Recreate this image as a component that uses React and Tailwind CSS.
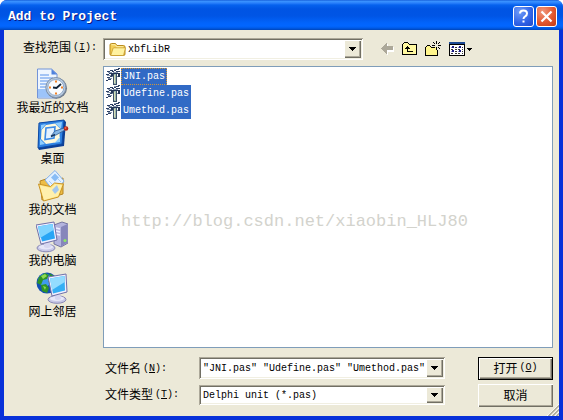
import React, { useState } from "react";

const latin = "font-['Liberation_Mono','Noto_Sans_CJK_SC',monospace] text-[10px]";
const cjk = "font-['Noto_Sans_CJK_SC',sans-serif] text-[12px]";
const sunken =
  "shadow-[inset_1px_1px_#aca899,inset_-1px_-1px_#ffffff,inset_2px_2px_#716f64,inset_-2px_-2px_#f1efe2]";
const raised =
  "shadow-[inset_1px_1px_#ffffff,inset_-1px_-1px_#716f64,inset_-2px_-2px_#aca899]";

function DropArrow() {
  return (
    <span
      className={`pointer-events-none absolute top-[2px] right-[2px] bottom-[2px] flex w-[17px] items-center justify-center bg-[#ece9d8] ${raised}`}
      aria-hidden="true"
    >
      <svg width="7" height="4" shapeRendering="crispEdges">
        <path d="M0 0h7v1H6v1H5v1H4v1H3V3H2V2H1V1H0z" fill="#000" />
      </svg>
    </span>
  );
}

function Combo({ children, className = "" }) {
  return (
    <div className={`relative flex items-center bg-white p-[2px] ${sunken} ${className}`}>
      {children}
      <DropArrow />
    </div>
  );
}

function FolderIcon() {
  return (
    <svg width="17" height="15" viewBox="0 0 17 15" className="shrink-0">
      <path d="M1 3Q1 1.500 2.500 1.500h4l1.500 2h6.500Q16 3.500 16 5v7q0 1.500-1.500 1.500h-12Q1 13.500 1 12z" fill="#f4cf58" stroke="#b98b1d" />
      <path d="M2 12.500 4 6.500q.2-.7 1-.7h11.500l-1.800 7q-.2.700-1 .700H2.500z" fill="#fff2a0" stroke="#c89b2b" strokeWidth=".8" />
      <path d="M2.500 2.700h3.700l1.500 2h6.500" fill="none" stroke="#fff5bd" strokeWidth=".8" />
    </svg>
  );
}

function BackIcon() {
  return (
    <svg width="14" height="12" shapeRendering="crispEdges">
      <path d="M1 6.500 7 1v3h6v5H7v3z" fill="#fff" />
      <path d="M0 5.500 6 0v3h6v4H6v4z" fill="#aca899" />
    </svg>
  );
}

function UpIcon() {
  return (
    <svg width="16" height="14" shapeRendering="crispEdges">
      <path d="M1 2h1V1h4v1h1v1h7v9H1z" fill="#fff8a0" />
      <path d="M2 0h4v1H2zM1 1h1v1H1zM6 1h1v1H6zM0 2h1v11H0zM7 2h8v1H7zM14 3h1v10h-1zM0 12h15v1H0z" fill="#000" />
      <path d="M5 4h1v1h1v1h1v1H6v2h5v1H5V7H3V6h1V5h1z" fill="#000" />
    </svg>
  );
}

function NewFolderIcon() {
  return (
    <svg width="17" height="16" shapeRendering="crispEdges">
      <path d="M1 6h1V5h3v1h7v8H1z" fill="#fff58c" />
      <path d="M2 4h3v1H2zM1 5h1v1H1zM5 5h1v1H5zM0 6h1v8H0zM6 6h3v1H6zM12 9h1v5h-1zM0 14h13v1H0z" fill="#000" />
      <path d="M11 0h1v3h-1zM11 6h1v3h-1zM7 4h3v1H7zM13 4h3v1h-3zM8 1h1v1H8zM9 2h1v1H9zM13 2h1v1h-1zM14 1h1v1h-1zM13 6h1v1h-1zM14 7h1v1h-1zM9 6h1v1H9z" fill="#000" />
    </svg>
  );
}

function ViewsIcon() {
  return (
    <svg width="24" height="14" shapeRendering="crispEdges">
      <path d="M0 0h16v14H0z" fill="#000" />
      <path d="M1 3h14v10H1z" fill="#fff" />
      <path d="M0 0h16v2H0z" fill="#1c4a94" />
      <path d="M3 4h2v2H3zM10 4h2v2h-2zM3 8h2v2H3zM10 8h2v2h-2z" fill="#1c1c84" />
      <path d="M2 5h1v1H2zM9 5h1v1H9zM2 9h1v1H2zM9 9h1v1H9z" fill="#8c8cd0" />
      <path d="M6 5h2v1H6zM13 5h1v1h-1zM6 9h2v1H6zM13 9h1v1h-1zM2 7h2v1H2zM6 7h2v1H6zM9 7h2v1H9zM13 7h1v1h-1zM2 11h2v1H2zM6 11h2v1H6zM9 11h2v1H9zM13 11h1v1h-1z" fill="#333" />
      <path d="M18 6h5v1h-1v1h-1v1h-1V8h-1V7h-1z" fill="#000" />
    </svg>
  );
}

function RecentIcon() {
  return (
    <svg width="32" height="32" viewBox="0 0 32 32">
      <path d="M1.500 1h14L21 6v24H1.500z" fill="#eef6ff" stroke="#7394d8" />
      <path d="M2 21h18v8.500H2z" fill="#9cc4fa" />
      <path d="M15.500 1v5.500H21z" fill="#4f82dc" />
      <path d="M4 7h9M4 10h13M4 13h9M4 16h7M4 19h6" stroke="#8bb4f2" strokeWidth="1.300" />
      <circle cx="20.500" cy="20.200" r="10.500" fill="#6d7888" />
      <circle cx="19.800" cy="19.500" r="10" fill="#b9cbe0" stroke="#7f93ab" />
      <circle cx="19.800" cy="19.500" r="8" fill="#f8fcff" stroke="#8fa9c8" />
      <path d="M20 12.500v2M20 24.500v2M13 19.500h2M25 19.500h2" stroke="#f08228" strokeWidth="2" />
      <path d="m17 19.500 3.500.500 4.500-4" fill="none" stroke="#102338" strokeWidth="1.800" />
    </svg>
  );
}

function DesktopIcon() {
  return (
    <svg width="32" height="32" viewBox="0 0 32 32">
      <path d="M2 4 27 1l2 2-2 24-25 4-1-2z" fill="#0d3f96" />
      <path d="M2 4 27 1l-2 24-24 4z" fill="#2f82e2" stroke="#0d4aa5" />
      <path d="m4 6 5-1-5 6zM18 4l7-1-1 7zM3 20l5 5-5 1zM23 17v6l-6 1z" fill="#8cccff" />
      <path d="M9 6 18 4.500l5 5-.5 9-4.500 5-9 1.500-5-5 .5-9z" fill="#fff9dc" />
      <path d="m9 9 9-1-1 11-9 1.500z" fill="#e3f1ff" stroke="#3e8ce6" strokeWidth="1.600" />
      <path d="m14 17 4-5 9-3 1 2-9 5z" fill="#86b7e6" stroke="#305a94" strokeWidth=".8" />
      <path d="m14 17.500 4-2" stroke="#18385f" strokeWidth="1.500" />
      <circle cx="29" cy="9.500" r="2.300" fill="#b82416" />
      <circle cx="28.500" cy="9" r="1" fill="#f06a50" />
    </svg>
  );
}

function DocumentsIcon() {
  return (
    <svg width="32" height="32" viewBox="0 0 32 32">
      <path d="M4 11 10 9l2 3 15-4v16L6 30z" fill="#edbd45" stroke="#b68420" />
      <path d="m9 10 10-9.500L28 11l-9 12z" fill="#e3f1ff" stroke="#83afe8" />
      <path d="m15 7.500 4-4 4 4-4 4z" fill="#88bcf5" />
      <path d="m13 11 3 3M22 9l3 3" stroke="#a6ccf8" />
      <path d="m2.500 14 12 2.500 4-3.500 9 1-5 13-15 4z" fill="#ffe27a" stroke="#c99428" />
      <path d="m4 15.500 11 2.500 4-4 7 1-4 11-14 4z" fill="#fff0ac" />
      <path d="m16 20 5-5 2 5-4 4z" fill="#a4c8ee" />
    </svg>
  );
}

function ComputerIcon() {
  return (
    <svg width="32" height="32" viewBox="0 0 32 32">
      <path d="m18 4 8-3 6 2v19l-7 4-7-3z" fill="#b4b4de" stroke="#76769f" />
      <path d="m25 6 6.500-3v18.500L25 25.500z" fill="#8686bb" />
      <path d="m20 7 4 1M20 10l4 1M20 13l4 1" stroke="#eeeeff" strokeWidth="1.300" />
      <circle cx="29" cy="19.500" r="1.500" fill="#8dea62" />
      <ellipse cx="10" cy="27" rx="9" ry="3.800" fill="#c8c8e8" stroke="#8989b5" />
      <ellipse cx="10" cy="26" rx="7" ry="2.500" fill="#e6e6f8" />
      <path d="M8 20h6l1 6q-4 2-7 0z" fill="#d6d6f0" />
      <path d="m0 4 18-3 3 18-16 4z" fill="#f0f0ff" stroke="#7070a8" />
      <path d="m2 5.500 14.500-2.500L19 17.500 6 20.500z" fill="#28a5f5" />
      <path d="m2 5.500 14.500-2.500 1 6L4 17z" fill="#7fd4ff" />
    </svg>
  );
}

function NetworkIcon() {
  return (
    <svg width="32" height="32" viewBox="0 0 32 32">
      <circle cx="11" cy="11" r="10.500" fill="#124fb4" />
      <circle cx="9" cy="8" r="6.500" fill="#3f9af0" />
      <path d="m3 5 6-4 4 2-2 4-4 1-2 5-4-2zM13 1l5 3 3 5-6 4-3-4 3-3zM5 13l5-1 3 4-2 5-5-2z" fill="#2f9428" />
      <path d="m5 4 4-2 2 2-4 3zM14 6l3 1-2 4zM7 14l3 1-1 3z" fill="#8fdc52" />
      <ellipse cx="21" cy="27.500" rx="9" ry="3.800" fill="#c8c8e8" stroke="#8989b5" />
      <ellipse cx="21" cy="26.500" rx="7" ry="2.500" fill="#e8e8f8" />
      <path d="M19 22h5l1 5q-4 2-6 0z" fill="#d6d6f0" />
      <path d="m12 5 18-3 1 18-15 4z" fill="#f0f0ff" stroke="#7070a8" />
      <path d="M14 6.500 28.500 4l.5 14.500L17 21.500z" fill="#35aff4" />
      <path d="M14 6.500 28.500 4l.3 6L16 18z" fill="#93dcff" />
    </svg>
  );
}

function UnitIcon() {
  return (
    <svg width="15" height="17" viewBox="0 0 15 17" className="shrink-0" shapeRendering="crispEdges">
      <path d="M1 3h3v1H1zM4 2h3v1H4zM0 6h3v1H0zM3 5h3v1H3zM6 3h2v1H6zM8 2h2v1H8zM10 1h3v1h-3zM12 0h2v1h-2zM1 9h3v1H1zM4 8h2v1H4zM0 12h2v1H0zM2 11h3v1H2zM10 3h4v1h-4z" fill="#2c3f63" />
      <path d="M2 4h4v1H2zM7 4h5v1H7zM1 7h4v1H1zM8 1h2v1H8zM2 10h3v1H2zM5 10h1v1H5z" fill="#8294ad" />
      <path d="M5 5h9v1H5zM5 6h2v2H5zM12 6h2v3h-2z" fill="#233656" />
      <path d="M7 6h4v11H7z" fill="#3c5068" />
      <path d="M8 6h2v10H8z" fill="#9db8ae" />
      <path d="M8 7h1v8H8z" fill="#d8dfb8" />
      <path d="M11 8h1v1h-1zM6 8h1v1H6z" fill="#74879b" />
    </svg>
  );
}

const places = [
  ["我最近的文档", RecentIcon],
  ["桌面", DesktopIcon],
  ["我的文档", DocumentsIcon],
  ["我的电脑", ComputerIcon],
  ["网上邻居", NetworkIcon],
];

const files = ["JNI.pas", "Udefine.pas", "Umethod.pas"];

function FieldLabel({ htmlFor, text, hotkey, className = "" }) {
  return (
    <label htmlFor={htmlFor} className={`flex items-center whitespace-nowrap ${cjk} ${className}`}>
      {text}
      <span className={`pl-[2px] ${latin}`}>
        (<u>{hotkey}</u>):
      </span>
    </label>
  );
}

export default function App() {
  const [name, setName] = useState('"JNI.pas" "Udefine.pas" "Umethod.pas"');

  return (
    <div className="bg-white">
      <main className="flex min-h-screen flex-col overflow-hidden rounded-t-[7px] bg-[#0831d9] text-black">
        <header className="flex h-[30px] shrink-0 items-center bg-[linear-gradient(to_bottom,#0a4fd0_0px,#3d95ff_1px,#2a80fb_3px,#0662ee_5px,#0054e3_9px,#0055e5_16px,#0264fb_23px,#0266ff_26px,#005be8_28px,#0045b8_30px)] pt-[3px] pr-[6px] pl-2">
          <h1 className="flex-1 font-['Liberation_Mono',monospace] text-[13px] font-bold text-white [text-shadow:1px_1px_#0a1883]">
            Add to Project
          </h1>
          <div className="flex gap-[2px]">
            <button
              aria-label="Help"
              className="flex size-[21px] items-center justify-center rounded-[3px] border border-white bg-[radial-gradient(circle_at_30%_25%,#6f9cf8,#2f62e6_60%,#1f49c8)]"
            >
              <svg width="13" height="15" viewBox="0 0 13 15">
                <path d="M3 4.500Q3 1.500 6.500 1.500T10 4.500Q10 6.300 8.200 7.300 6.500 8.200 6.500 10" fill="none" stroke="#fff" strokeWidth="2" />
                <path d="M5.500 11.500h2v2h-2z" fill="#fff" />
              </svg>
            </button>
            <button
              aria-label="Close"
              className="flex size-[21px] items-center justify-center rounded-[3px] border border-white bg-[radial-gradient(circle_at_30%_25%,#f0987c,#e2572f_55%,#c33a12)]"
            >
              <svg width="13" height="13" viewBox="0 0 13 13">
                <path d="m1.500 1.500 10 10M11.500 1.500l-10 10" stroke="#fff" strokeWidth="2.200" />
              </svg>
            </button>
          </div>
        </header>

        <div className="mx-1 mb-1 flex flex-1 flex-col">
          <div className="relative flex flex-1 flex-col bg-[#ece9d8] pt-2 pr-[6px] pb-[9px]">
            <div className="flex h-[22px]">
              <FieldLabel htmlFor="look-in" text="查找范围" hotkey="I" className="w-[99px] shrink-0 pb-1 pl-[19px]" />
              <Combo className="min-w-0 flex-1 pl-[6px]">
                <FolderIcon />
                <select id="look-in" className={`h-full min-w-0 flex-1 appearance-none bg-transparent pl-[2px] outline-none ${latin}`}>
                  <option>xbfLibR</option>
                </select>
              </Combo>
              <div className="ml-[18px] flex w-[172px] shrink-0 items-center gap-[7px]">
                <button aria-label="Back"><BackIcon /></button>
                <button aria-label="Up one level"><UpIcon /></button>
                <button aria-label="New folder"><NewFolderIcon /></button>
                <button aria-label="Views"><ViewsIcon /></button>
              </div>
            </div>

            <div className="mt-[6px] flex flex-1">
              <nav className="flex w-[99px] shrink-0 flex-col items-center gap-[5px] pt-[2px] pr-[2px]">
                {places.map(([label, Icon]) => (
                  <button key={label} className={`flex flex-col items-center whitespace-nowrap ${cjk}`}>
                    <Icon />
                    <span className="leading-[14px]">{label}</span>
                  </button>
                ))}
              </nav>

              <div className="flex min-w-0 flex-1 flex-col">
                <div className="relative flex-1 border border-[#7f9db9] bg-white p-[1px]">
                  <ul role="listbox" aria-label="Files" aria-multiselectable="true">
                    {files.map((file, i) => (
                      <li key={file} role="option" aria-selected="true" className="flex h-[17px] items-center pl-px">
                        <UnitIcon />
                        <span
                          className={`h-[17px] border bg-[#316ac5] px-px leading-[16px] text-white ${latin} ${
                            i === 0 ? "border-dotted border-[#ce953a]" : "border-[#316ac5]"
                          }`}
                        >
                          {file}
                        </span>
                      </li>
                    ))}
                  </ul>
                  <p className="absolute top-[144px] left-[17px] font-['Liberation_Mono',monospace] text-[17px] leading-[22px] text-[#d3d3cd]">
                    http://blog.csdn.net/xiaobin_HLJ80
                  </p>
                </div>
              </div>
            </div>

            <form className="mt-[9px] flex pl-[101px]" onSubmit={(e) => e.preventDefault()}>
              <div className="flex min-w-0 flex-1 flex-col gap-[6px]">
                <div className="flex h-[22px]">
                  <FieldLabel htmlFor="file-name" text="文件名" hotkey="N" className="w-[94px] shrink-0" />
                  <Combo className="min-w-0 flex-1">
                    <input
                      id="file-name"
                      value={name}
                      onChange={(e) => setName(e.target.value)}
                      className={`h-full w-full min-w-0 bg-transparent pr-[17px] pl-[2px] outline-none ${latin}`}
                    />
                  </Combo>
                </div>
                <div className="flex h-[20px]">
                  <FieldLabel htmlFor="file-type" text="文件类型" hotkey="T" className="w-[94px] shrink-0 pb-[2px]" />
                  <Combo className="min-w-0 flex-1">
                    <select id="file-type" className={`h-full w-full appearance-none bg-transparent pl-[2px] outline-none ${latin}`}>
                      <option>Delphi unit (*.pas)</option>
                    </select>
                  </Combo>
                </div>
              </div>
              <div className="ml-[33px] flex w-[75px] shrink-0 flex-col gap-1">
                <button
                  type="submit"
                  className={`flex h-[23px] items-center justify-center border border-black bg-[#ece9d8] pb-[2px] ${raised} ${cjk}`}
                >
                  打开<span className={`pl-[2px] ${latin}`}>(<u>O</u>)</span>
                </button>
                <button type="button" className={`flex h-[23px] items-center justify-center bg-[#ece9d8] pb-[2px] ${raised} ${cjk}`}>
                  取消
                </button>
              </div>
            </form>

            <svg width="12" height="12" className="absolute right-0 bottom-0" aria-hidden="true">
              <path d="M0 12 12 0M4 12l8-8M8 12l4-4" stroke="#fff" />
              <path d="M1.500 12 12 1.500M5.500 12 12 5.500M9.500 12 12 9.500" stroke="#aca899" strokeWidth="1.500" />
            </svg>
          </div>
        </div>
      </main>
    </div>
  );
}
